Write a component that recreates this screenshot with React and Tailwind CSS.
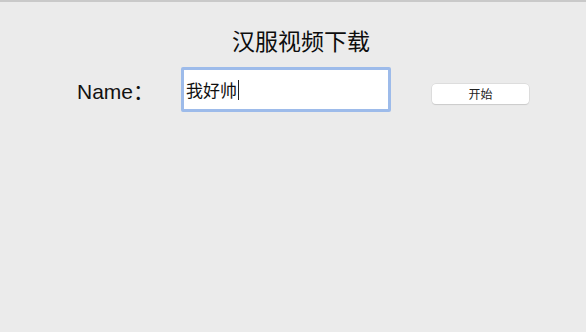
export default function App() {
  return (
    <div className="w-[586px] h-[332px] bg-[#ebebeb] border-t-2 border-[#c9c9c9] flex flex-col overflow-hidden" style={{fontFamily: '"Noto Sans CJK SC", sans-serif'}}>
      <div className="mt-[25px] pl-[16px] text-center text-[23px] leading-[26px] text-[#0d0d0d]">汉服视频下载</div>
      <div className="flex items-center mt-[14px] h-[45px]">
        <div className="ml-[77px] w-[104px] text-[21px] text-[#111] leading-[24px] mt-[4px]" style={{fontFamily: '"Liberation Sans", "Noto Sans CJK SC", sans-serif'}}>Name：</div>
        <div className="w-[210px] h-[45px] rounded-[2px] border-[3px] border-[#9dbbea] bg-white flex items-center pl-[2px]">
          <span className="text-[17px] leading-[20px] text-[#111]">我好帅</span>
          <span className="w-px h-[20px] bg-[#222] ml-px"></span>
        </div>
        <button className="ml-[41px] mt-[9px] w-[97px] h-[20px] bg-white rounded-[4px] shadow-[0_0_0_0.5px_#d0d0d0,0_1px_1px_rgba(0,0,0,0.15)] text-[12px] leading-[20px] text-[#222] flex items-center justify-center">开始</button>
      </div>
    </div>
  );
}
